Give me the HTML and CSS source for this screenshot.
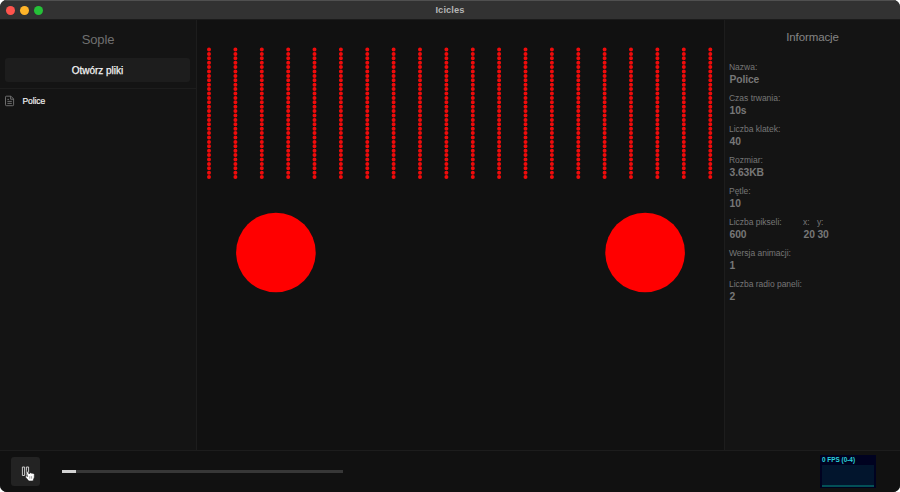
FILE: index.html
```html
<!DOCTYPE html>
<html lang="pl">
<head>
<meta charset="utf-8">
<title>Icicles</title>
<link rel="stylesheet" href="styles.css">
</head>
<body>
<div class="window">
  <header class="titlebar">
    <div class="lights"><i class="light close"></i><i class="light minimize"></i><i class="light maximize"></i></div>
    <span class="title">Icicles</span>
  </header>
  <div class="workspace">
    <aside class="files">
      <h1 class="files-title">Sople</h1>
      <button class="open">Otwórz pliki</button>
      <div class="file">
        <svg class="file-icon" width="10" height="12" viewBox="0 0 10 12"><path d="M1.4 1.2H5.9L8.6 3.9V9.8Q8.6 10.7 7.7 10.7H1.4Q.5 10.7 .5 9.8V2.1Q.5 1.2 1.4 1.2ZM5.6 1.2V4.2H8.6M2.4 4.4H4M2.4 6.4H6.8M2.4 8.4H6.8"/></svg>
        <span>Police</span>
      </div>
    </aside>
    <main class="stage">
      <svg width="527" height="430" viewBox="197 20 527 430">
        <path class="strips" d="M209 49.5v127.7M235.4 49.5v127.7M261.8 49.5v127.7M288.2 49.5v127.7M314.5 49.5v127.7M340.9 49.5v127.7M367.3 49.5v127.7M393.6 49.5v127.7M420 49.5v127.7M446.4 49.5v127.7M472.8 49.5v127.7M499.1 49.5v127.7M525.5 49.5v127.7M551.9 49.5v127.7M578.3 49.5v127.7M604.6 49.5v127.7M631 49.5v127.7M657.4 49.5v127.7M683.8 49.5v127.7M710.3 49.5v127.7"/>
        <circle class="panel" cx="275.9" cy="252.5" r="39.8"/>
        <circle class="panel" cx="645.1" cy="252.5" r="39.8"/>
      </svg>
    </main>
    <aside class="info">
      <h2 class="info-title">Informacje</h2>
      <dl class="facts">
        <div class="fact"><dt>Nazwa:</dt><dd>Police</dd></div>
        <div class="fact"><dt>Czas trwania:</dt><dd>10s</dd></div>
        <div class="fact"><dt>Liczba klatek:</dt><dd>40</dd></div>
        <div class="fact"><dt>Rozmiar:</dt><dd>3.63KB</dd></div>
        <div class="fact"><dt>Pętle:</dt><dd>10</dd></div>
        <div class="fact-row">
          <div class="fact pixels"><dt>Liczba pikseli:</dt><dd>600</dd></div>
          <div class="fact axis"><dt>x:</dt><dd>20</dd></div>
          <div class="fact axis"><dt>y:</dt><dd>30</dd></div>
        </div>
        <div class="fact"><dt>Wersja animacji:</dt><dd>1</dd></div>
        <div class="fact"><dt>Liczba radio paneli:</dt><dd>2</dd></div>
      </dl>
    </aside>
  </div>
  <footer class="player">
    <button class="pause" aria-label="Pauza">
      <svg width="29" height="29" viewBox="0 0 29 29">
        <path class="pause-bars" d="M11.4 10h2.2v8.5h-2.2zM15.4 10h2.2v8.5h-2.2z"/>
        <path class="pointer" d="M14.8 14.4Q15.9 13.6 16.8 14.9L18.2 17L18.8 15.9Q19.8 15.4 20.3 16.2Q21.2 15.7 21.8 16.5Q23 16.1 23.3 17.2V20.2L22 24H17.8L14.6 20.2Q14 18.8 15.4 18.9L16.7 19.4Z"/>
        <path class="pointer-lines" d="M18.8 19.2v2.5M20.6 19.2v2.5"/>
      </svg>
    </button>
    <div class="track"><div class="progress"></div></div>
    <div class="fps">
      <span>0 FPS (0-4)</span>
      <div class="graph"></div>
    </div>
  </footer>
</div>
</body>
</html>
```

FILE: styles.css
```css
* { box-sizing: border-box; }
body { margin: 0; background: #fff; font-family: "Liberation Sans", Arial, sans-serif; }
button { border: 0; padding: 0; font-family: inherit; }
h1, h2, dl, dd { margin: 0; }
.window { width: 900px; height: 492px; display: flex; flex-direction: column; overflow: hidden; border-radius: 7px; background: #111; }
.titlebar { height: 20px; flex: none; display: grid; grid-template-columns: 60px 1fr 60px; align-items: center; background: #323232; border-top: 1px solid #505050; border-bottom: 1px solid #1b1b1b; }
.lights { display: flex; gap: 5px; padding-left: 5.5px; }
.light { width: 9px; height: 9px; border-radius: 50%; }
.close { background: #ff544d; }
.minimize { background: #ffb429; }
.maximize { background: #25c138; }
.title { text-align: center; font-size: 9.3px; line-height: 18px; font-weight: bold; letter-spacing: .1px; color: #b5b5b5; }
.workspace { height: 430px; flex: none; display: grid; grid-template-columns: 197px 527px 176px; }
.files { background: #141414; border-right: 1px solid #1d1d1d; }
.files-title { height: 38px; padding-top: 12px; font-size: 13px; line-height: 15px; font-weight: normal; text-align: center; letter-spacing: -.1px; color: #707070; }
.open { display: block; width: 185px; height: 24px; margin: 0 5px; border-radius: 3px; background: #1d1d1d; color: #f4f4f4; font-size: 10px; line-height: 25px; letter-spacing: -.03px; -webkit-text-stroke: .25px #f4f4f4; }
.file { height: 26px; margin-top: 6px; border-top: 1px solid #1d1d1d; display: flex; align-items: center; gap: 8px; padding: 0 5px 2px; color: #f0f0f0; font-size: 8.5px; letter-spacing: -.1px; -webkit-text-stroke: .2px #f0f0f0; }
.file span { margin-left: -.5px; }
.file-icon { fill: none; stroke: #777; stroke-width: .9; }
.stage { background: #111; }
.stage svg { display: block; }
.strips { fill: none; stroke: #f00b0b; stroke-width: 4; stroke-linecap: round; stroke-dasharray: 0 4.4; }
.panel { fill: #f00; }
.info { background: #141414; border-left: 1px solid #1d1d1d; padding-left: 4px; }
.info-title { margin-left: -4px; padding-top: 10px; height: 41px; font-size: 11.5px; line-height: 14px; font-weight: normal; text-align: center; letter-spacing: -.1px; color: #858585; }
.facts { font-size: 8.5px; color: #777; }
.fact { height: 30.95px; }
.fact dt { height: 12px; line-height: 12px; letter-spacing: -.02px; white-space: nowrap; }
.fact dd { height: 13px; padding-left: .5px; line-height: 14.5px; font-size: 10.3px; letter-spacing: -.1px; font-weight: bold; }
.fact-row { display: flex; }
.pixels { width: 74px; }
.axis { width: 13.9px; }
.player { height: 42px; flex: none; display: flex; align-items: flex-start; padding: 6px 24px 0 11px; border-top: 1px solid #1d1d1d; background: #111; }
.pause { width: 29px; height: 29px; border-radius: 3px; background: #232323; }
.pause svg { display: block; }
.pause-bars { fill: none; stroke: #ddd; stroke-width: .9; }
.pointer { fill: #fff; stroke: #222; stroke-width: .6; }
.pointer-lines { fill: none; stroke: #444; stroke-width: .5; }
.track { width: 281px; height: 3px; margin: 13px 0 0 22px; background: #373737; }
.progress { width: 14px; height: 3px; background: #d2d2d2; }
.fps { width: 56px; height: 33px; margin: -2px 0 0 auto; padding: 0 2px; background: #000220; color: #2bd4de; }
.fps span { display: block; height: 10px; font-size: 6.4px; line-height: 9px; font-weight: bold; white-space: nowrap; }
.graph { height: 22px; background: #02152d; border-bottom: 2px solid #035057; }
```
